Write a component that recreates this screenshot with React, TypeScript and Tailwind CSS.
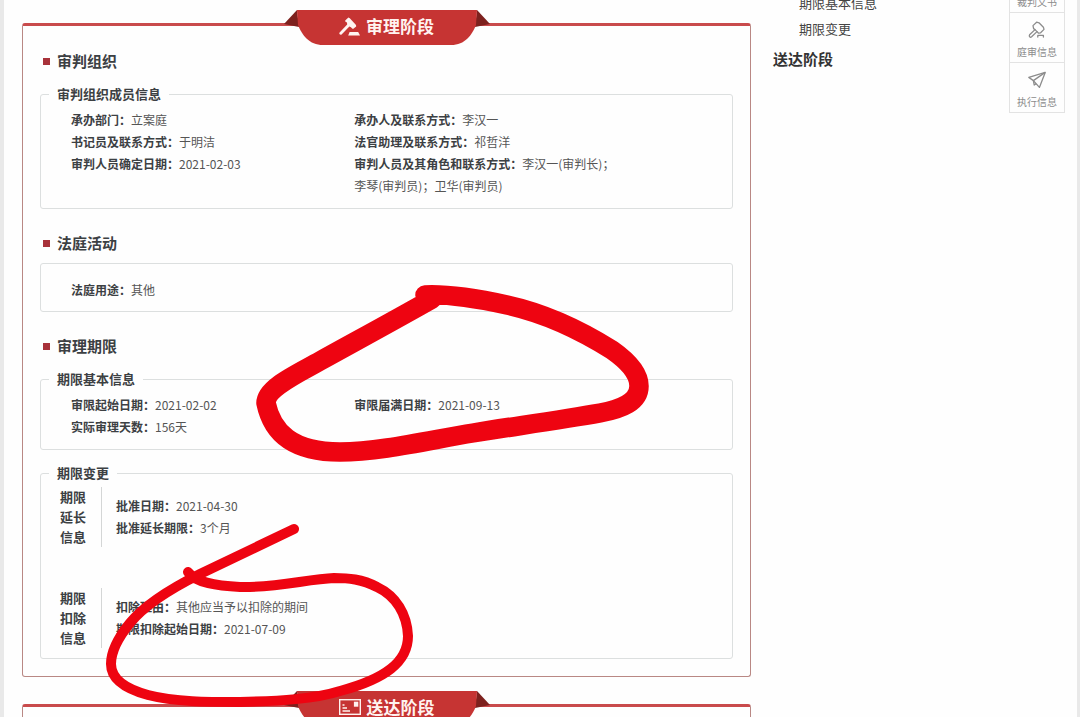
import React from "react";

interface FieldProps {
  label: string;
  children: React.ReactNode;
}

const Field: React.FC<FieldProps> = ({ label, children }) => (
  <div className="text-xs leading-[22px] text-[#555]">
    <dt className="inline font-bold text-[#3c4043]">{label}：</dt>
    <dd className="inline">{children}</dd>
  </div>
);

const SectionTitle: React.FC<{ children: React.ReactNode }> = ({ children }) => (
  <h3 className="flex items-center gap-[7px] pl-[3px] text-[15px] font-bold leading-6 text-[#3c4043]">
    <span className="size-[7px] bg-[#a8323a]" />
    {children}
  </h3>
);

interface GroupProps {
  title: string;
  className?: string;
  children: React.ReactNode;
}

const Group: React.FC<GroupProps> = ({ title, className = "", children }) => (
  <fieldset className={`min-w-0 rounded-[3px] border border-[#dcdfdf] ${className}`}>
    <legend className="ml-2 px-2 text-[13px] font-bold leading-5 text-[#3c4043]">{title}</legend>
    {children}
  </fieldset>
);

interface ChangeRowProps {
  lines: string[];
  children: React.ReactNode;
}

const ChangeRow: React.FC<ChangeRowProps> = ({ lines, children }) => (
  <div className="flex items-center">
    <h4 className="w-[42px] border-r border-[#d4d6d6] text-[13px] font-bold leading-5 text-[#3c4043]">
      {lines.map((line) => (
        <span key={line} className="block">
          {line}
        </span>
      ))}
    </h4>
    <dl className="pl-[14px]">{children}</dl>
  </div>
);

interface StageProps {
  title: string;
  icon: React.ReactNode;
  children?: React.ReactNode;
}

const Stage: React.FC<StageProps> = ({ title, icon, children }) => (
  <section className="relative rounded-[3px] border border-t-[3px] border-[#b98884] border-t-[#c94b4c] px-[17px] pb-[17px] pt-[23px]">
    {/* Ribbon over the top edge */}
    <h2 className="absolute -top-4 left-1/2 flex h-[35px] w-[206px] -translate-x-1/2 items-center justify-center gap-[6px] pb-[3px] text-[17px] font-bold leading-6 text-[#fff3f0]">
      <svg className="absolute inset-0 -z-10" width="206" height="35" viewBox="0 0 206 35">
        <path d="M13 0L0 14L15 17Z" fill="#7d211e" />
        <path d="M193 0L206 14L191 17Z" fill="#7d211e" />
        <path d="M13 0H193L192 15C188 25 181 35 167 35H39C25 35 18 25 14 15Z" fill="#c63433" />
      </svg>
      {icon}
      {title}
    </h2>
    {children}
  </section>
);

const HammerIcon = () => (
  <svg width="21" height="19" viewBox="0 0 21 19" fill="currentColor">
    <path d="M6.2 3.4L9.4 .4L10.8 1.2L17 8L17.2 9.6L14 12L12.6 11L12 10.2L10.4 9.6L2.6 17.4C1.2 18.4-.4 16.8.6 15.4L8.2 7.4L8 5.6L6.4 4.8Z" />
    <path d="M10.6 15H19.2L21 18.4H9.2Z" />
  </svg>
);

const LetterIcon = () => (
  <svg width="22" height="16" viewBox="0 0 22 16" fill="none" stroke="currentColor" strokeWidth="1.4">
    <rect x="0.7" y="0.7" width="20.6" height="14.6" />
    <path d="M3.5 6H5.5M3.5 9H8M3.5 12H11" />
    <rect x="15.6" y="3.4" width="3" height="3.6" fill="currentColor" />
  </svg>
);

const GavelIcon = () => (
  <svg width="18" height="18" viewBox="0 0 18 18" fill="none" stroke="currentColor" strokeWidth="1.3" strokeLinejoin="round" strokeLinecap="round">
    <path d="M8.6 1.2L5 4.6L5.6 7.6L7 8.6L1.6 13.8C.6 15.4 2.2 17 3.6 15.8L9 10.6L10.6 12.2L12.6 11.8L16 8.4L15.4 6.2L11 1.8Z" />
    <path d="M7 8.6L9 10.6M9.8 16V14.4H15.4V16" />
  </svg>
);

const PlaneIcon = () => (
  <svg width="18" height="18" viewBox="0 0 18 18" fill="none" stroke="currentColor" strokeWidth="1.3" strokeLinejoin="round">
    <path d="M17.2 1.4L.8 6.4L5.4 9.6L11.4 16.4Z" />
    <path d="M5.4 9.6L17.2 1.4M5.4 9.6L6.2 14L8.2 12.6" />
  </svg>
);

const tabs = [
  { label: "裁判文书", icon: null },
  { label: "庭审信息", icon: <GavelIcon /> },
  { label: "执行信息", icon: <PlaneIcon /> },
];

// Hand-drawn red marks over the page
const Marks = () => (
  <svg
    className="pointer-events-none absolute -left-1 top-0"
    width="700"
    height="717"
    viewBox="0 0 700 717"
    fill="none"
    stroke="#ee0411"
    strokeLinecap="round"
    strokeLinejoin="round"
  >
    <path
      strokeWidth="19.5"
      d="M425 295C445 294 470 297 507 305C548 314 585 333 612 350C632 364 639 376 639 386C639 402 622 409 600 413C560 420 510 427 473 433C430 440 380 452 340 452C292 452 272 432 266 403C266 388 295 375 320 361C358 340 395 320 432 299"
    />
    <path
      strokeWidth="10"
      d="M294 529L200 574C168 590 143 607 130 623C117 639 111 652 111 664C111 679 126 689 148 695C175 702 208 702 240 702C280 701 315 699 340 691C385 679 408 662 408 636C407 614 396 596 377 587C362 579 348 578 334 578C308 579 275 588 240 587C217 586 196 583 188 572"
    />
  </svg>
);

export default function App() {
  return (
    <div className="relative isolate flex h-screen gap-[22px] overflow-hidden border-l-4 border-r-[3px] border-[#e9e9e9] bg-[#fefefe] pl-[18px] font-['Noto_Sans_CJK_SC',sans-serif]">
      <main className="flex min-w-0 flex-1 flex-col gap-[27px] pt-[23px]">
        <Stage title="审理阶段" icon={<HammerIcon />}>
          <SectionTitle>审判组织</SectionTitle>
          <Group title="审判组织成员信息" className="mt-[11px] pb-[11px] pl-[30px] pt-[5px] [&>legend]:-ml-[22px]">
            <dl className="grid grid-cols-[3fr_3fr_1fr]">
              <div>
                <Field label="承办部门">立案庭</Field>
                <Field label="书记员及联系方式">于明洁</Field>
                <Field label="审判人员确定日期">2021-02-03</Field>
              </div>
              <div>
                <Field label="承办人及联系方式">李汉一</Field>
                <Field label="法官助理及联系方式">祁哲洋</Field>
                <Field label="审判人员及其角色和联系方式">
                  李汉一(审判长)；
                  <span className="inline-block">李琴(审判员)；卫华(审判员)</span>
                </Field>
              </div>
            </dl>
          </Group>

          <div className="mt-[22px]">
            <SectionTitle>法庭活动</SectionTitle>
            <dl className="mt-2 rounded-[3px] border border-[#dcdfdf] pb-[10px] pl-[30px] pt-[15px]">
              <Field label="法庭用途">其他</Field>
            </dl>
          </div>

          <div className="mt-[22px]">
            <SectionTitle>审理期限</SectionTitle>
            <Group title="期限基本信息" className="mt-[11px] pb-[11px] pl-[30px] pt-[5px] [&>legend]:-ml-[22px]">
              <dl className="grid grid-cols-[3fr_3fr_1fr]">
                <div>
                  <Field label="审限起始日期">2021-02-02</Field>
                  <Field label="实际审理天数">156天</Field>
                </div>
                <div>
                  <Field label="审限届满日期">2021-09-13</Field>
                </div>
              </dl>
            </Group>
            <Group title="期限变更" className="mt-[13px] pb-[10px] pl-[19px] pt-1 [&>legend]:-ml-[11px]">
              <div className="flex flex-col gap-[41px]">
                <ChangeRow lines={["期限", "延长", "信息"]}>
                  <Field label="批准日期">2021-04-30</Field>
                  <Field label="批准延长期限">3个月</Field>
                </ChangeRow>
                <ChangeRow lines={["期限", "扣除", "信息"]}>
                  <Field label="扣除理由">其他应当予以扣除的期间</Field>
                  <Field label="期限扣除起始日期">2021-07-09</Field>
                </ChangeRow>
              </div>
            </Group>
          </div>
        </Stage>

        <Stage title="送达阶段" icon={<LetterIcon />} />
      </main>

      <aside className="flex w-[304px] items-start justify-between pr-3">
        {/* Outline of the page */}
        <nav className="-mt-[10px] flex flex-col text-[13px] leading-[26px] text-[#444]">
          <a href="#term-info" className="pl-[26px]">
            期限基本信息
          </a>
          <a href="#term-change" className="pl-[26px]">
            期限变更
          </a>
          <a href="#delivery" className="pt-1 text-[15px] font-bold text-[#333]">
            送达阶段
          </a>
        </nav>

        {/* Quick tabs */}
        <div className="-mt-[37px] w-14 border-x border-[#e3e3e3]">
          {tabs.map((tab) => (
            <button
              key={tab.label}
              type="button"
              className="flex h-[50px] w-full flex-col items-center justify-end gap-[5px] border-b border-[#e3e3e3] pb-[2px] text-[10px] leading-4 text-[#8c8c8c]"
            >
              {tab.icon}
              {tab.label}
            </button>
          ))}
        </div>
      </aside>

      <Marks />
    </div>
  );
}
